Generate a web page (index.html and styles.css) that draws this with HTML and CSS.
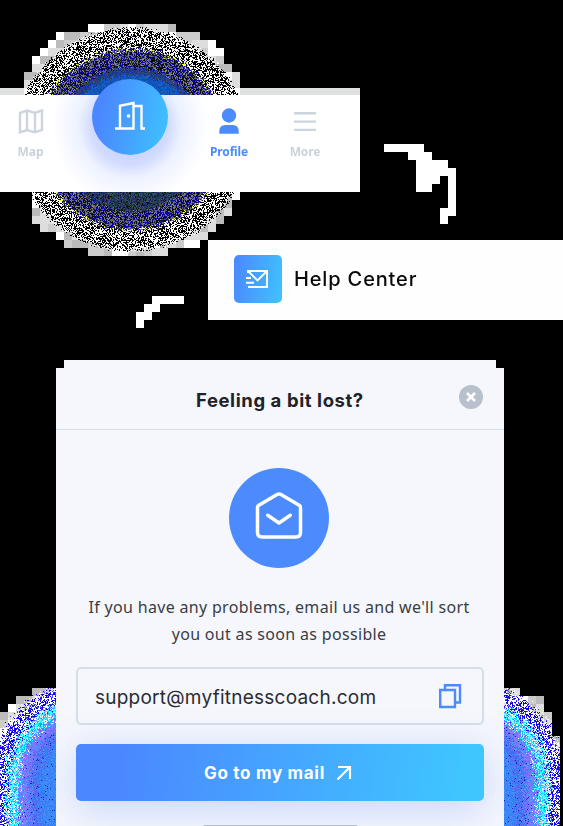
FILE: index.html
```html
<!DOCTYPE html>
<html lang="en">
<head>
<meta charset="utf-8">
<title>Help Center</title>
<link rel="stylesheet" href="styles.css">
</head>
<body>
<canvas class="backdrop" id="backdrop" width="563" height="826"></canvas>
<svg class="arrows" width="563" height="826" viewBox="0 0 563 826" fill="#fff" aria-hidden="true">
  <path d="M384 144H424V152H432V160H448V168H456V216H448V224H440V208H448V176H440V184H432V192H416V160H408V152H384Z"/>
  <path d="M152 296H184V304H160V312H152V320H144V328H136V312H144V304H152Z"/>
</svg>
<main class="stage">
  <nav class="tabbar">
    <a class="tab">
      <svg width="26" height="26" viewBox="0 0 26 26" fill="none" stroke="#ccd4de" stroke-width="2.400"><path d="M2 4.800L9 2.500L17 4.800L24 2.500V22L17 24.300L9 22L2 24.300ZM9 2.500V22M17 4.800V24.300"/></svg>
      <span class="label map">Map</span>
    </a>
    <a class="fab">
      <svg width="32" height="32" viewBox="0 0 32 32" fill="none" stroke="#fff" stroke-width="2.400"><path d="M1 28.500H19.500V3L6 5.800V28.500M19.500 6H27.500V28.500H31"/><circle cx="14.500" cy="16" r="1.800" fill="#fff" stroke="none"/></svg>
    </a>
    <a class="tab active">
      <svg width="26" height="26" viewBox="0 0 26 26" fill="#4c8bfd"><circle cx="13" cy="7.500" r="7.200"/><path d="M3.300 25.700V23.400Q3.300 17.100 9.500 17.100H16.500Q22.700 17.100 22.700 23.400V25.700Z"/></svg>
      <span class="label profile">Profile</span>
    </a>
    <a class="tab">
      <svg width="26" height="26" viewBox="0 0 26 26" stroke="#ccd4de" stroke-width="2.400"><path d="M2 5.300H24M2 13.600H24M2 21.900H24"/></svg>
      <span class="label more">More</span>
    </a>
  </nav>

  <section class="help">
    <div class="help-icon">
      <svg width="24" height="20" viewBox="0 0 24 20" fill="none" stroke="#fff" stroke-width="1.900"><path d="M3 4V2H22V18H3M3 2L12.500 11.500L22 2M1 9H6M1 13.800H9"/></svg>
    </div>
    <span class="help-title">Help Center</span>
  </section>

  <section class="card">
    <header class="card-head">
      <h1>Feeling a bit lost?</h1>
      <svg class="close" width="24" height="24" viewBox="0 0 24 24"><circle cx="12" cy="12" r="12" fill="#b8c0cb"/><path d="M8 8L16 16M16 8L8 16" stroke="#fff" stroke-width="2.600"/></svg>
    </header>
    <div class="mail-badge">
      <svg width="50" height="50" viewBox="0 0 50 50" fill="none" stroke="#fff" stroke-width="3.500" stroke-linecap="round" stroke-linejoin="round"><path d="M3.500 16.500Q3.500 15 4.800 14.200L23.500 3.300Q25 2.500 26.500 3.300L45.200 14.200Q46.500 15 46.500 16.500V41.500Q46.500 46 42 46H8Q3.500 46 3.500 41.500ZM13.700 24.300L25 32L36.300 24.300"/></svg>
    </div>
    <p class="copy"><span class="line one">If you have any problems, email us and we'll sort</span><span class="line two">you out as soon as possible</span></p>
    <div class="email">
      <span class="address">support@myfitnesscoach.com</span>
      <svg width="24" height="26" viewBox="0 0 24 26" fill="none" stroke="#4c8bfd" stroke-width="2.400"><path d="M2.200 7H17V24H2.200ZM7 7V2.200H22V19.500H17"/></svg>
    </div>
    <button class="go"><span>Go to my mail</span>
      <svg width="16" height="16" viewBox="0 0 16 16" fill="none" stroke="#fff" stroke-width="2.200"><path d="M2 2H14V14M14 2L1.500 14.500"/></svg>
    </button>
    <div class="home-bar"></div>
  </section>
</main>
<script src="backdrop.js"></script>
</body>
</html>
```
FILE: styles.css
```css
* { box-sizing: border-box; }
body {
  margin: 0;
  width: 563px;
  height: 826px;
  overflow: hidden;
  position: relative;
  background: #000;
  font-family: "Inter", sans-serif;
}
.backdrop, .arrows { position: absolute; top: 0; left: 0; display: block; }
.stage {
  position: relative;
  height: 826px;
  overflow: hidden;
  display: flex;
  flex-direction: column;
  padding-top: 95px;
}
.tabbar {
  flex: none;
  width: 360px;
  height: 97px;
  padding-left: 1px;
  display: grid;
  grid-template-columns: 59px 139px 60px 92px;
  background: radial-gradient(circle at 130px 31px, #b4c5fe 0, #d3dcfe 39px, #edf2ff 52px, #fff 78px);
}
.tab {
  display: flex;
  flex-direction: column;
  align-items: center;
  padding-top: 13px;
}
.tab svg { flex: none; }
.label {
  margin-top: 9px;
  font: 700 12px/18px "Noto Sans", sans-serif;
  color: #ccd2dd;
  white-space: nowrap;
}
.map, .more { letter-spacing: -.1px; }
.active .label { color: #4c8bfd; }
.profile { letter-spacing: -.15px; }
.fab {
  justify-self: center;
  margin-top: -16px;
  width: 76px;
  height: 76px;
  border-radius: 50%;
  background: linear-gradient(100deg, #4b87ff 15%, #3ec1ff 95%);
  display: flex;
  align-items: center;
  justify-content: center;
}
.fab svg { margin-top: -2px; }
.help {
  flex: none;
  margin: 48px 0 0 208px;
  height: 80px;
  padding: 0 0 2px 26px;
  display: flex;
  align-items: center;
  gap: 12px;
  background: #fefefe;
}
.help-icon {
  width: 48px;
  height: 48px;
  border-radius: 5px;
  background: linear-gradient(100deg, #4b87ff, #3fc3ff);
  display: flex;
  align-items: center;
  justify-content: center;
}
.help-icon svg { margin-right: 2px; }
.help-title { font-size: 20px; font-weight: 500; color: #0a0a0a; letter-spacing: .85px; }
.card {
  flex: none;
  width: 448px;
  height: 466px;
  margin: 40px 0 0 56px;
  display: flex;
  flex-direction: column;
  align-items: center;
  background: #f5f7fc;
  clip-path: polygon(8px 0, 440px 0, 440px 8px, 448px 8px, 448px 466px, 0 466px, 0 8px, 8px 8px);
}
.card-head {
  flex: none;
  width: 100%;
  height: 70px;
  padding: 0 21px 0 140px;
  display: flex;
  justify-content: space-between;
  align-items: center;
  border-bottom: 1px solid #d5dee8;
}
h1 { margin: 11px 0 0; font-size: 18.5px; line-height: 24px; font-weight: 700; color: #202329; white-space: nowrap; letter-spacing: .58px; }
.close { margin-top: 5px; }
.mail-badge {
  flex: none;
  width: 100px;
  height: 100px;
  margin: 38px 2px 0 0;
  border-radius: 50%;
  background: #4c8bfd;
  display: flex;
  align-items: center;
  justify-content: center;
}
.mail-badge svg { margin-bottom: 4px; }
.copy { margin: 26px 2px 0 0; font: 400 16px/27px "Noto Sans", sans-serif; color: #3a3d43; text-align: center; letter-spacing: .32px; }
.line { display: block; white-space: nowrap; }
.email {
  flex: none;
  width: 408px;
  height: 58px;
  margin-top: 19px;
  padding: 0 20px 0 17px;
  border: 2px solid #d5dfe8;
  border-radius: 5px;
  display: flex;
  align-items: center;
  justify-content: space-between;
}
.address { padding-top: 2px; font-size: 19px; color: #292c31; letter-spacing: .24px; }
.go {
  flex: none;
  width: 408px;
  height: 57px;
  margin: 19px 0 0;
  padding: 0 4px 0 0;
  border: 0;
  border-radius: 5px;
  display: flex;
  align-items: center;
  justify-content: center;
  gap: 11px;
  background: linear-gradient(98deg, #4b87ff 10%, #3fc6ff 95%);
  box-shadow: 0 8px 40px rgba(76, 123, 255, .28);
  color: #fff;
  font: 700 17px "Inter", sans-serif;
  letter-spacing: .7px;
}
.home-bar { flex: none; width: 155px; height: 5px; margin-top: 24px; border-radius: 2px; background: #b4bbcb; }
```
FILE: backdrop.js
```js
const ctx = document.getElementById('backdrop').getContext('2d');
let seed = 20241;
function rnd() {
  seed = (seed * 1664525 + 1013904223) >>> 0;
  return seed / 4294967296;
}
function pick(list) { return list[Math.floor(rnd() * list.length)]; }
function dot(x, y, color) { ctx.fillStyle = color; ctx.fillRect(x, y, 1, 1); }

// Stepped silhouette rows: [top, left, right], each 8px tall.
const upper = [
  [24, 88, 176], [32, 56, 200], [40, 48, 216], [48, 40, 224], [56, 32, 224],
  [64, 32, 232], [72, 24, 240], [80, 24, 240], [88, 24, 240],
  [184, 24, 240], [192, 32, 240], [200, 32, 232], [208, 32, 232], [216, 32, 224],
  [224, 40, 216], [232, 56, 208], [240, 64, 200], [248, 88, 168]
];
const lower = [
  [688, 32, 520], [696, 16, 544], [704, 8, 544], [712, 0, 552], [720, 0, 552], [728, 0, 552]
];
for (let y = 736; y < 826; y += 8) lower.push([y, 0, 560]);

function topHalo(x, y) {
  const r = Math.hypot((x - 131) * .96, y - 139) + (rnd() - .5) * 5;
  if (r > 111) return null;
  if (r > 92) return pick(['#000', '#000', '#000', '#fff', '#fff', '#fff']);
  if (r > 89) return rnd() < .14 ? '#e8ee20' : pick(['#000', '#fff', '#1414b0', '#777']);
  if (r > 72) return pick(['#000', '#08088a', '#1010b0', '#666', '#888', '#111', '#5555a0']);
  if (y > 180) return pick(['#17364c', '#184d48', '#202b68', '#44505c', '#111', '#292f75']);
  if (r > 65) return pick(['#11399a', '#36465f', '#1636ae', '#493e83', '#123f72']);
  return pick(['#1059bd', '#1556cd', '#0d4b9e', '#1566c9', '#174ab3']);
}
function bottomHalo(x, y) {
  const dx = Math.max(90 - x, 0, x - 465), dy = Math.max(780 - y, 0);
  const d = Math.hypot(dx, dy) + (rnd() - .5) * 10;
  if (d > 99) return null;
  if (d > 83) return pick(['#fff', '#fff', '#fff', '#1500e8', '#0a00cc', '#4b42ff']);
  if (d > 71) return pick(['#00ffff', '#5ff', '#fff', '#28c8ff', '#3b8cff', '#8ff']);
  if (rnd() < .03) return '#1423c8';
  if (d > 60) return pick(['#756fff', '#8278f8', '#6474ff', '#7e7cff', '#5a9dfa']);
  if (d > 50) return pick(['#4d62ee', '#5567f5', '#3d78ef', '#5868f4', '#3d90f4']);
  return pick(['#347cf3', '#438aff', '#3c95f5', '#4b7bf4', '#2f85f8']);
}
function paint(rows, shade) {
  for (const [top, left, right] of rows) {
    for (let x = left; x < right; x += 8) {
      ctx.fillStyle = pick(['#fff', '#ddd', '#bbb', '#ccc']);
      ctx.fillRect(x, top, 8, 8);
    }
    for (let y = top; y < Math.min(top + 8, 826); y++) {
      for (let x = left; x < right; x++) {
        const color = shade(x, y);
        if (color) dot(x, y, color);
      }
    }
  }
}
ctx.fillStyle = '#dfe0e0';
ctx.fillRect(0, 88, 360, 8);
paint(upper, topHalo);
paint(lower, bottomHalo);
```
